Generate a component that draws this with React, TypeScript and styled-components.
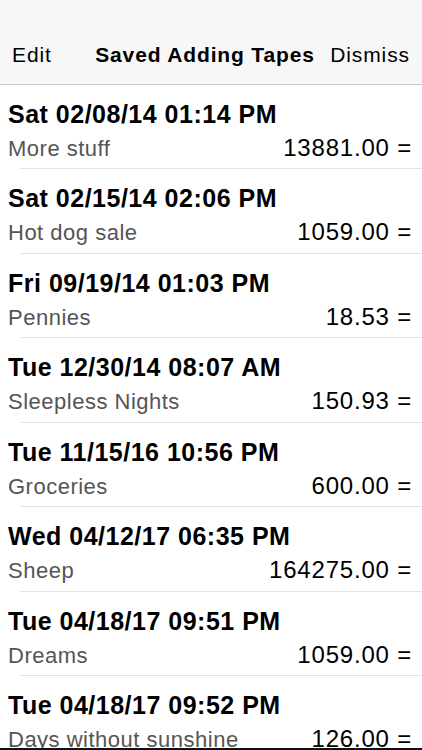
import React from 'react';
import styled, {createGlobalStyle} from 'styled-components';

const tapes = [
    {date: 'Sat 02/08/14 01:14 PM', name: 'More stuff', total: '13881.00'},
    {date: 'Sat 02/15/14 02:06 PM', name: 'Hot dog sale', total: '1059.00'},
    {date: 'Fri 09/19/14 01:03 PM', name: 'Pennies', total: '18.53'},
    {date: 'Tue 12/30/14 08:07 AM', name: 'Sleepless Nights', total: '150.93'},
    {date: 'Tue 11/15/16 10:56 PM', name: 'Groceries', total: '600.00'},
    {date: 'Wed 04/12/17 06:35 PM', name: 'Sheep', total: '164275.00'},
    {date: 'Tue 04/18/17 09:51 PM', name: 'Dreams', total: '1059.00'},
    {date: 'Tue 04/18/17 09:52 PM', name: 'Days without sunshine', total: '126.00'},
]

export default function App() {
    return (
        <>
            <GlobalStyle/>
            <Screen>
                <NavBar>
                    <NavButton>Edit</NavButton>
                    <NavTitle>Saved Adding Tapes</NavTitle>
                    <NavButton>Dismiss</NavButton>
                </NavBar>
                <TapeList>
                    {tapes.map((tape, index) => (
                        <TapeRow key={index}>
                            <TapeDate>{tape.date}</TapeDate>
                            <TapeLine>
                                <TapeName>{tape.name}</TapeName>
                                <TapeTotal>{tape.total} =</TapeTotal>
                            </TapeLine>
                        </TapeRow>
                    ))}
                </TapeList>
            </Screen>
        </>
    );
}

const GlobalStyle = createGlobalStyle`
  html, body {
    margin: 0;
    padding: 0;
    background: #fff;
  }

  body {
    font-family: "Liberation Sans", Arial, Helvetica, sans-serif;
    color: #000;
  }
`

const Screen = styled.div`
  width: 422px;
  height: 750px;
  box-sizing: border-box;
  overflow: hidden;
  border-bottom: 2px solid #111;
  background: #fff;
`

const NavBar = styled.header`
  height: 85px;
  box-sizing: border-box;
  padding: 0 12px 16px 12px;
  display: flex;
  align-items: flex-end;
  justify-content: space-between;
  background: #f7f7f7;
  border-bottom: 1px solid #c9c9cc;
`

const NavButton = styled.span`
  font-size: 21px;
  line-height: 26px;
  letter-spacing: 0.9px;
  color: #000;
`

const NavTitle = styled.span`
  font-size: 21px;
  line-height: 26px;
  letter-spacing: 0.85px;
  font-weight: bold;
  margin-left: 28px;
`

const TapeList = styled.div`
  display: flex;
  flex-direction: column;
`

const TapeRow = styled.div`
  height: 84.43px;
  box-sizing: border-box;
  padding-top: 14px;
  display: flex;
  flex-direction: column;

  &::after {
    content: '';
    display: block;
    height: 1px;
    margin: auto 0 0 20px;
    background: #e2e2e4;
  }
`

const TapeDate = styled.div`
  padding: 0 8px;
  font-size: 25px;
  line-height: 30px;
  letter-spacing: 0.5px;
  font-weight: bold;
`

const TapeLine = styled.div`
  margin-top: 4px;
  padding: 0 10px 0 8px;
  display: flex;
  align-items: baseline;
  justify-content: space-between;
  line-height: 30px;
`

const TapeName = styled.span`
  font-size: 22px;
  letter-spacing: 0.5px;
  color: #555;
`

const TapeTotal = styled.span`
  font-size: 24px;
  letter-spacing: 0.8px;
  color: #000;
`
